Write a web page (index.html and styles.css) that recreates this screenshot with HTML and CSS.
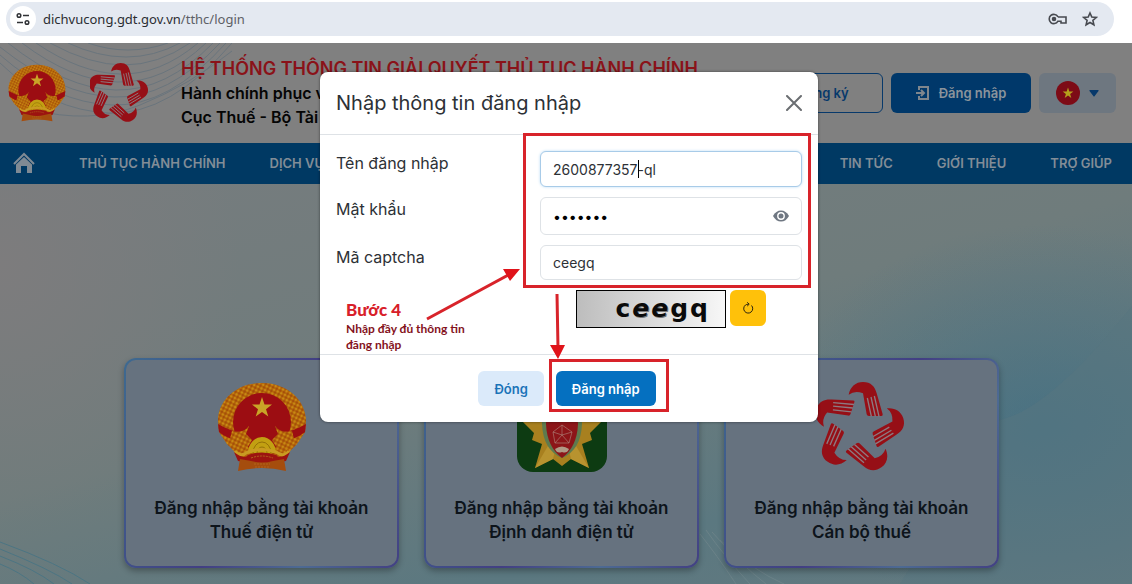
FILE: index.html
```html
<!DOCTYPE html>
<html lang="vi">
<head>
    <meta charset="UTF-8">
    <meta name="viewport" content="width=device-width, initial-scale=1.0">
    <title>Đăng nhập</title>
    <link rel="stylesheet" href="styles.css">
</head>
<body>
    <!-- Shared logos -->
    <svg class="defs" aria-hidden="true">
        <defs>
            <pattern id="grain" width="4" height="4" patternUnits="userSpaceOnUse" patternTransform="rotate(25)">
                <circle cx="1" cy="1" r="0.800" fill="#8f3208"/>
                <circle cx="3" cy="3" r="0.900" fill="#cf9a18"/>
            </pattern>
            <symbol id="emblem" viewBox="0 0 90 90">
                <path d="M45 1C19 1 1 19 1 39L2 50L10 62L17 69Q24 78 45 79Q66 78 73 69L80 62L88 50L89 39C89 19 71 1 45 1Z" fill="#b5660a"/>
                <path d="M45 1C19 1 1 19 1 39L2 50L10 62L17 69Q24 78 45 79Q66 78 73 69L80 62L88 50L89 39C89 19 71 1 45 1Z" fill="url(#grain)"/>
                <circle cx="45" cy="40" r="29" fill="#9c0d12"/>
                <path d="M1 42Q13 49 28 52L22 59Q9 56 2 50ZM89 42Q77 49 62 52L68 59Q81 56 88 50Z" fill="#9c0d12"/>
                <path d="M15 49Q26 52 32 44L29 52L35 58L29 68Q20 69 12 61ZM75 49Q64 52 58 44L61 52L55 58L61 68Q70 69 78 61Z" fill="#b5660a"/>
                <path d="M15 49Q26 52 32 44L29 52L35 58L29 68Q20 69 12 61ZM75 49Q64 52 58 44L61 52L55 58L61 68Q70 69 78 61Z" fill="url(#grain)"/>
                <path d="M45 15L47.500 22.500H55L49 27.200L51.300 34.600L45 30L38.700 34.600L41 27.200L35 22.500H42.500Z" fill="#c9a427"/>
                <path d="M31 71A14 16 0 0 1 59 71Z" fill="#c2a012"/>
                <path d="M36 71A9 11 0 0 1 54 71M40 71A5 6 0 0 1 50 71" fill="none" stroke="#957008" stroke-width="1"/>
                <path d="M18 69Q23 76 31 70Q45 65 59 70Q67 76 72 69" fill="none" stroke="#c99b22" stroke-width="3"/>
                <path d="M17 70Q27 78 31 73Q45 68 59 73Q63 78 73 70L69 79L45 83L21 79Z" fill="#9c1310"/>
                <path d="M23 77L34 79Q45 82 56 79L67 77L69 89Q45 83 21 89Z" fill="#a54d0d"/>
                <path d="M34 76Q45 72 56 76M37 82H53M38 85H52" fill="none" stroke="#b2641c" stroke-width="1" stroke-dasharray="2 1"/>
            </symbol>
            <g id="hand">
                <path d="M95 38C100 14 116 0 138 0C162 0 174 14 179 34L197 97Q198 102 193 102L156 102Q150 102 149 97L138 34Q114 24 95 38Z"/>
                <path d="M151 48L163 103M162 45L175 103M172 42L186 103" fill="none" stroke="#8d7a80" stroke-width="4"/>
            </g>
            <symbol id="hands" viewBox="0 0 270 270">
                <use href="#hand"/>
                <use href="#hand" transform="rotate(72 124 137)"/>
                <use href="#hand" transform="rotate(144 124 137)"/>
                <use href="#hand" transform="rotate(216 124 137)"/>
                <use href="#hand" transform="rotate(288 124 137)"/>
            </symbol>
        </defs>
    </svg>

    <div class="browser-bar">
        <div class="address">
            <span class="site-info">
                <svg width="14" height="14" viewBox="0 0 14 14" fill="none" stroke="#303236" stroke-width="1.500">
                    <circle cx="3" cy="3.500" r="1.800"/>
                    <path d="M7 3.500H13M1 10.500H7"/>
                    <circle cx="11" cy="10.500" r="1.800"/>
                </svg>
            </span>
            <span class="url">dichvucong.gdt.gov.vn<span class="path">/tthc/login</span></span>
            <svg width="20" height="14" viewBox="0 0 20 14" fill="none" stroke="#474a50" stroke-width="1.600">
                <path d="M9.800 4.700A4.600 4.600 0 1 0 9.800 9.300H13V11H18V5H9.800"/>
                <circle cx="6" cy="7" r="1.500" fill="#474a50"/>
            </svg>
            <svg width="16" height="16" viewBox="0 0 16 16" fill="none" stroke="#474a50" stroke-width="1.600">
                <path d="M8 2L9.800 6.100L14.300 6.500L10.900 9.400L11.900 13.800L8 11.500L4.100 13.800L5.100 9.400L1.700 6.500L6.200 6.100Z"/>
            </svg>
        </div>
    </div>

    <div class="site">
        <header class="header">
            <svg class="waves" width="240" height="100" viewBox="0 0 240 100" fill="none" stroke="#6a757d" stroke-width="1">
                <path d="M0 20Q50 68 110 70T232 0"/>
                <path d="M0 12Q55 60 112 62T226 0"/>
                <path d="M0 4Q60 52 114 54T220 0"/>
                <path d="M8 0Q66 46 116 47T213 0"/>
                <path d="M22 0Q72 38 118 39T206 0"/>
                <path d="M36 0Q80 30 120 31T198 0"/>
                <path d="M50 0Q90 22 124 22T190 0"/>
                <path d="M68 0Q98 14 126 14T180 0"/>
                <path d="M88 0Q108 7 128 7T168 0"/>
                <path d="M30 66Q90 82 140 62T232 8"/>
            </svg>
            <svg class="logo" width="58" height="58"><use href="#emblem"/></svg>
            <svg class="logo hands" width="60" height="60"><use href="#hands"/></svg>
            <div class="brand">
                <h1>HỆ THỐNG THÔNG TIN GIẢI QUYẾT THỦ TỤC HÀNH CHÍNH</h1>
                <p>Hành chính phục vụ</p>
                <p>Cục Thuế - Bộ Tài</p>
            </div>
            <button type="button" class="head-btn outline">Đăng ký</button>
            <button type="button" class="head-btn solid">
                <svg width="14" height="16" viewBox="0 0 14 16" fill="none" stroke="#7f868d" stroke-width="2">
                    <path d="M3 5V2H12V14H3V11M0 8H8M5 5L8 8L5 11"/>
                </svg>
                Đăng nhập
            </button>
            <button type="button" class="head-btn lang" aria-label="Tiếng Việt">
                <svg width="24" height="24" viewBox="0 0 24 24">
                    <circle cx="12" cy="12" r="12" fill="#7d0b16"/>
                    <path d="M12 6.500L13.300 10.500H17.400L14.100 12.900L15.300 17L12 14.500L8.700 17L9.900 12.900L6.600 10.500H10.700Z" fill="#b5a11c"/>
                </svg>
                <svg width="10" height="7" viewBox="0 0 10 7"><path d="M1 0H9Q10 0 9.500 1L5.700 6Q5 7 4.300 6L0.500 1Q0 0 1 0Z" fill="#07396b"/></svg>
            </button>
        </header>

        <nav class="nav">
            <a href="#" aria-label="Trang chủ">
                <svg width="22" height="22" viewBox="0 0 22 22" fill="#7f8a94">
                    <path d="M11 5L19 12.500V21H14V14H8V21H3V12.500Z"/>
                    <path d="M1 12L11 2L21 12" fill="none" stroke="#7f8a94" stroke-width="2"/>
                </svg>
            </a>
            <a href="#">THỦ TỤC HÀNH CHÍNH</a>
            <a href="#">DỊCH VỤ</a>
            <a href="#" class="push">TIN TỨC</a>
            <a href="#">GIỚI THIỆU</a>
            <a href="#">TRỢ GIÚP</a>
        </nav>

        <main class="main">
            <svg class="backdrop-art" viewBox="0 0 1132 400" preserveAspectRatio="none" fill="none">
                <path d="M1132 122Q1050 225 1000 236L900 400H1132Z" fill="#58757f" fill-opacity="0.500"/>
                <g stroke="#4c7583" stroke-width="1">
                    <path d="M0 365Q50 385 72 400M0 358Q60 380 90 400M0 372Q36 386 54 400"/>
                    <path d="M0 380Q20 388 34 400"/>
                </g>
                <g stroke="#6b8288" stroke-width="1">
                    <path d="M700 350Q716 370 736 400M706 346Q724 372 750 400M712 348Q740 380 766 400M720 356Q752 386 784 400"/>
                </g>
            </svg>
            <a href="#" class="card">
                <svg width="90" height="90"><use href="#emblem"/></svg>
                <span>Đăng nhập bằng tài khoản<br>Thuế điện tử</span>
            </a>
            <a href="#" class="card">
                <svg width="90" height="90" viewBox="0 0 90 90">
                    <rect width="90" height="90" rx="16" fill="#0d3b12"/>
                    <path d="M45 4L54 22L71 14L67 34L86 38L73 51L75 58L65 62L72 86L54 77L45 84L36 77L18 86L25 62L15 58L17 51L4 38L23 34L19 14L36 22Z" fill="#a8801f"/>
                    <path d="M45 40L18 86L36 77ZM45 40L72 86L54 77Z" fill="#b8932f"/>
                    <path d="M45 15Q66 20 65 42Q64 68 45 76Q26 68 25 42Q24 20 45 15Z" fill="#5e7a4e"/>
                    <path d="M45 18Q61 24 61 42Q60 65 45 76Q30 65 29 42Q29 24 45 18Z" fill="#8c1518"/>
                    <path d="M45 43L36 50L38 61L52 61L55 50ZM45 43L45 53L36 50M45 53L55 50M38 61L45 53L52 61" fill="none" stroke="#b08a80" stroke-width="0.600"/>
                    <path d="M38 67Q45 62 52 67Q50 72 45 70Q40 72 38 67Z" fill="#b09a86"/>
                </svg>
                <span>Đăng nhập bằng tài khoản<br>Định danh điện tử</span>
            </a>
            <a href="#" class="card">
                <svg class="hands" width="90" height="90"><use href="#hands"/></svg>
                <span>Đăng nhập bằng tài khoản<br>Cán bộ thuế</span>
            </a>
        </main>
    </div>

    <div class="overlay">
        <form class="modal" id="login-form">
            <div class="modal-header">
                <h2>Nhập thông tin đăng nhập</h2>
                <button type="button" class="close" aria-label="Đóng cửa sổ">
                    <svg width="16" height="16" viewBox="0 0 16 16" stroke="#6b6e72" stroke-width="2" stroke-linecap="round"><path d="M1 1L15 15M15 1L1 15"/></svg>
                </button>
            </div>
            <div class="modal-body">
                <div class="row">
                    <label for="username">Tên đăng nhập</label>
                    <div class="field focused">
                        <input type="text" id="username" name="username" value="2600877357-ql">
                        <span class="caret"></span>
                    </div>
                </div>
                <div class="row">
                    <label for="password">Mật khẩu</label>
                    <div class="field">
                        <input type="password" id="password" name="password" value="abcdefg">
                        <button type="button" class="eye" aria-label="Hiện mật khẩu">
                            <svg width="16" height="12" viewBox="0 0 16 12">
                                <path d="M0 6Q3 0.500 8 0.500T16 6Q13 11.500 8 11.500T0 6Z" fill="#6f7782"/>
                                <circle cx="8" cy="6" r="3.200" fill="#6f7782" stroke="#ffffff" stroke-width="1.400"/>
                            </svg>
                        </button>
                    </div>
                </div>
                <div class="row">
                    <label for="captcha">Mã captcha</label>
                    <div class="field">
                        <input type="text" id="captcha" name="captcha" value="ceegq">
                    </div>
                </div>
                <div class="captcha">
                    <div class="captcha-img"><span>c</span><span class="rough">e</span><span class="rough">e</span><span>g</span><span>q</span></div>
                    <button type="button" class="refresh" aria-label="Tải lại mã">
                        <svg width="12" height="12" viewBox="0 0 12 12" fill="none" stroke="#2b2410" stroke-width="1">
                            <path d="M9.500 3.500A4.500 4.500 0 1 1 3.500 3Q4.600 2.200 6.500 2.200"/>
                            <path d="M5.200 0.300L7.200 2.200L5.200 4.100"/>
                        </svg>
                    </button>
                </div>
            </div>
            <div class="modal-footer">
                <button type="button" class="btn light">Đóng</button>
                <button type="submit" class="btn primary">Đăng nhập</button>
            </div>

            <!-- Step guide drawn over the form -->
            <svg class="marks" width="498" height="350" viewBox="0 0 498 350" fill="none" stroke="#d8232a" stroke-width="3">
                <path d="M204.500 62.500H489.500V214.500H204.500Z"/>
                <path d="M230.500 288.500H347.500V338.500H230.500Z"/>
                <path d="M107 247L190 202M237 222L238 276"/>
                <path d="M200 197L190 209L183 197ZM230 273H245L238 287Z" fill="#e0131a" stroke="none"/>
            </svg>
            <div class="note">
                <strong>Bước 4</strong>
                <p>Nhập đầy đủ thông tin<br>đăng nhập</p>
            </div>
        </form>
    </div>
</body>
</html>
```
FILE: styles.css
```css
* {
    box-sizing: border-box;
}
body {
    margin: 0;
    min-height: 100vh;
    display: flex;
    flex-direction: column;
    position: relative;
    font-family: Inter, "Liberation Sans", sans-serif;
    overflow: hidden;
}
h1, h2, p {
    margin: 0;
}
a {
    color: inherit;
    text-decoration: none;
}
button, input {
    font-family: inherit;
    margin: 0;
}
button {
    cursor: pointer;
    border: none;
    padding: 0;
    display: flex;
    align-items: center;
    justify-content: center;
}
.defs {
    position: absolute;
    width: 0;
    height: 0;
}

/* Browser bar */
.browser-bar {
    height: 43px;
    padding: 2px 18px 7px 6px;
    background: #ffffff;
}
.address {
    height: 34px;
    display: flex;
    align-items: center;
    gap: 14px;
    padding: 0 16px 0 4px;
    border-radius: 17px;
    background: #e4e9f1;
}
.site-info {
    width: 26px;
    height: 26px;
    border-radius: 50%;
    background: #ffffff;
    display: flex;
    align-items: center;
    justify-content: center;
}
.url {
    flex: 1;
    margin-left: -7px;
    font-family: "Noto Sans", "Open Sans", sans-serif;
    font-size: 13px;
    color: #2b2d31;
}
.url .path {
    color: #5d6066;
}

/* Site */
.site {
    flex: 1;
    display: flex;
    flex-direction: column;
}
.header {
    height: 100px;
    position: relative;
    display: flex;
    align-items: center;
    gap: 8px;
    padding: 0 16px 0 8px;
    background: #808080;
}
.waves {
    position: absolute;
    left: 0;
    top: 0;
}
.logo {
    position: relative;
    flex-shrink: 0;
    margin-right: 16px;
}
.logo.hands {
    margin-right: 23px;
}
.hands {
    fill: #960f16;
}
.brand {
    position: relative;
    flex: 1;
    min-width: 0;
    white-space: nowrap;
    font-size: 16px;
    line-height: 24px;
    font-weight: 600;
    color: #050505;
}
.brand h1 {
    font-size: 18px;
    line-height: 24px;
    font-weight: 600;
    color: #8a1218;
}
.head-btn {
    height: 40px;
    border-radius: 6px;
    font-size: 13px;
    font-weight: 600;
    gap: 9px;
}
.outline {
    width: 120px;
    border: 1px solid #07396b;
    background: transparent;
    color: #07396b;
}
.solid {
    width: 140px;
    background: #00386a;
    color: #8b949c;
}
.lang {
    width: 77px;
    background: #6e7780;
}
.nav {
    height: 41px;
    display: flex;
    align-items: center;
    gap: 44px;
    padding: 0 20px 2px 13px;
    background: #003963;
    color: #828d97;
    font-size: 13px;
    font-weight: 600;
    white-space: nowrap;
}
.nav svg {
    display: block;
}
.push {
    margin-left: auto;
}
.main {
    flex: 1;
    position: relative;
    display: flex;
    justify-content: center;
    align-items: flex-end;
    gap: 25px;
    padding: 0 9px 16px 0;
    background:
        radial-gradient(ellipse 260px 200px at 92% 60%, rgba(62, 110, 132, 0.6), transparent),
        radial-gradient(ellipse 240px 260px at 0 20%, #7d7c7d, transparent),
        linear-gradient(165deg, #767c7e 0%, #6f7c7c 45%, #5b7880 75%, #64797f 100%);
}
.backdrop-art {
    position: absolute;
    left: 0;
    top: 0;
    width: 100%;
    height: 100%;
}
.card {
    position: relative;
    width: 275px;
    height: 210px;
    display: flex;
    flex-direction: column;
    align-items: center;
    gap: 24px;
    padding-top: 22px;
    border: 2px solid transparent;
    border-radius: 12px;
    background:
        linear-gradient(#66727f, #66727f) padding-box,
        linear-gradient(120deg, #3e6a90, #423f83 50%, #4d6a93 75%, #423f83) border-box;
    box-shadow: 0 3px 6px rgba(0, 0, 0, 0.3);
    text-align: center;
    font-size: 17px;
    line-height: 24px;
    font-weight: 600;
    color: #0d141b;
}

/* Modal */
.overlay {
    position: absolute;
    inset: 0;
    display: flex;
    justify-content: center;
    align-items: flex-start;
    padding: 72px 0 0 6px;
}
.modal {
    position: relative;
    width: 498px;
    border-radius: 8px;
    background: #ffffff;
    box-shadow: 0 0 3px rgba(0, 0, 0, 0.5);
    color: #2d3136;
}
.modal-header {
    display: flex;
    justify-content: space-between;
    align-items: center;
    height: 63px;
    padding: 0 16px;
    border-bottom: 1px solid #dee2e6;
}
.modal-header h2 {
    font-size: 20px;
    line-height: 30px;
    font-weight: 400;
}
.close {
    background: none;
}
.modal-body {
    display: flex;
    flex-direction: column;
    gap: 10px;
    height: 219px;
    padding: 16px;
}
.row {
    display: flex;
    justify-content: space-between;
}
.row label {
    font-size: 16px;
    line-height: 25px;
}
.field {
    position: relative;
    width: 262px;
}
.field input {
    display: block;
    width: 100%;
    height: 35px;
    padding: 0 12px;
    border: 1px solid #dee2e6;
    border-radius: 6px;
    background: #ffffff;
    font-size: 14px;
    color: #2d3136;
    outline: none;
}
.field.focused input {
    height: 36px;
    border-color: #a8cbe8;
    box-shadow: 0 0 3px #bcdcf5;
}
.field input[type="password"] {
    height: 38px;
    color: #000000;
}
.caret {
    position: absolute;
    left: 98px;
    top: 9px;
    width: 1px;
    height: 18px;
    background: #000000;
}
.eye {
    position: absolute;
    right: 13px;
    top: 13px;
    background: none;
}
.captcha {
    display: flex;
    gap: 4px;
    padding-left: 240px;
}
.captcha-img {
    width: 150px;
    height: 38px;
    display: flex;
    align-items: center;
    justify-content: flex-end;
    gap: 2px;
    padding: 0 17px 0 0;
    border: 1px solid #000000;
    background: linear-gradient(to right, #bdbdbd, #f7f7f7);
    font-family: "DejaVu Sans", sans-serif;
    font-size: 25px;
    line-height: 30px;
    font-weight: 700;
    color: #0a0a0a;
}
.captcha-img .rough {
    font-style: italic;
    text-shadow: 1px 1px 0 #777777;
}
.refresh {
    width: 36px;
    height: 36px;
    border-radius: 6px;
    background: #ffc10a;
}
.modal-footer {
    display: flex;
    justify-content: center;
    gap: 12px;
    padding: 16px 4px 16px 0;
    border-top: 1px solid #dee2e6;
}
.btn {
    height: 35px;
    padding: 0 16px;
    border-radius: 6px;
    font-size: 13px;
    font-weight: 600;
}
.light {
    background: #dbeafa;
    color: #1a73b8;
}
.primary {
    background: #0570c0;
    color: #ffffff;
}
.marks {
    position: absolute;
    left: 0;
    top: 0;
    pointer-events: none;
}
.note {
    position: absolute;
    left: 26px;
    top: 227px;
    font-family: Lato, "Open Sans", sans-serif;
    font-size: 12px;
    line-height: 16px;
    font-weight: 700;
    color: #84121c;
}
.note strong {
    display: block;
    font-size: 17px;
    line-height: 22px;
    color: #d8202a;
}
```
